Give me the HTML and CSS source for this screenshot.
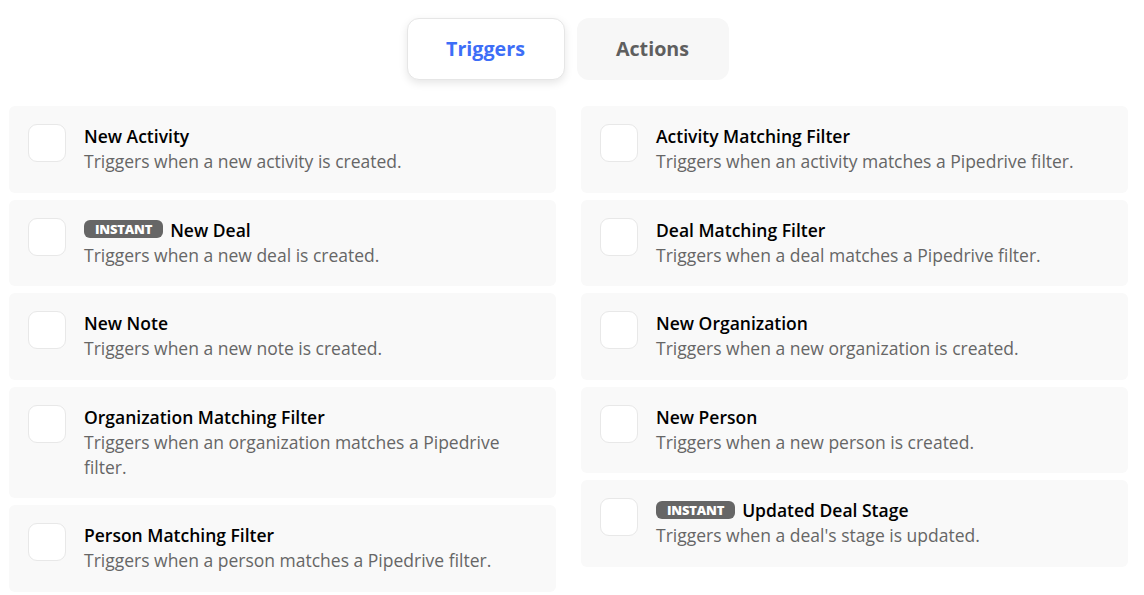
FILE: index.html
```html
<!DOCTYPE html>
<html>
<head>
<meta charset="utf-8">
<link rel="stylesheet" href="styles.css">
</head>
<body>
<div class="page">
  <div class="tabs">
    <button class="tab tab-active">Triggers</button>
    <button class="tab tab-plain">Actions</button>
  </div>
  <div class="columns">
    <div class="col">
      <div class="card"><div class="icon"></div><div class="body"><div class="title">New Activity</div><div class="desc">Triggers when a new activity is created.</div></div></div>
      <div class="card"><div class="icon"></div><div class="body"><div class="title"><span class="badge">INSTANT</span>New Deal</div><div class="desc">Triggers when a new deal is created.</div></div></div>
      <div class="card"><div class="icon"></div><div class="body"><div class="title">New Note</div><div class="desc">Triggers when a new note is created.</div></div></div>
      <div class="card"><div class="icon"></div><div class="body"><div class="title">Organization Matching Filter</div><div class="desc">Triggers when an organization matches a Pipedrive filter.</div></div></div>
      <div class="card"><div class="icon"></div><div class="body"><div class="title">Person Matching Filter</div><div class="desc">Triggers when a person matches a Pipedrive filter.</div></div></div>
    </div>
    <div class="col">
      <div class="card"><div class="icon"></div><div class="body"><div class="title">Activity Matching Filter</div><div class="desc">Triggers when an activity matches a Pipedrive filter.</div></div></div>
      <div class="card"><div class="icon"></div><div class="body"><div class="title">Deal Matching Filter</div><div class="desc">Triggers when a deal matches a Pipedrive filter.</div></div></div>
      <div class="card"><div class="icon"></div><div class="body"><div class="title">New Organization</div><div class="desc">Triggers when a new organization is created.</div></div></div>
      <div class="card"><div class="icon"></div><div class="body"><div class="title">New Person</div><div class="desc">Triggers when a new person is created.</div></div></div>
      <div class="card"><div class="icon"></div><div class="body"><div class="title"><span class="badge">INSTANT</span>Updated Deal Stage</div><div class="desc">Triggers when a deal's stage is updated.</div></div></div>
    </div>
  </div>
</div>
</body>
</html>
```

FILE: styles.css
```css
html, body {
  margin: 0;
  padding: 0;
  background: #ffffff;
}
body {
  font-family: "Open Sans", "Liberation Sans", sans-serif;
  color: #1c1c1c;
}
.page {
  padding: 18px 16px 0 9px;
}
.tabs {
  display: flex;
  justify-content: center;
  gap: 12px;
  padding-right: 2px;
}
.tab {
  font-family: inherit;
  height: 62px;
  border-radius: 12px;
  border: 1px solid transparent;
  background: #f7f7f7;
  color: #5f5f5f;
  font-size: 19.7px;
  font-weight: 700;
  padding: 0 0 2px 0;
  cursor: pointer;
}
.tab-plain {
  width: 152px;
}
.tab-active {
  width: 158px;
  background: #ffffff;
  border-color: #e6e6e6;
  color: #3d6ef7;
  box-shadow: 0 3px 8px rgba(0, 0, 0, 0.1);
}
.columns {
  display: grid;
  grid-template-columns: 547px 547px;
  column-gap: 25px;
  margin-top: 26px;
  align-items: start;
}
.col {
  display: flex;
  flex-direction: column;
  gap: 7px;
}
.card {
  display: flex;
  gap: 18px;
  background: #f9f9f9;
  border-radius: 6px;
  padding: 18px 20px 18.5px 19px;
}
.icon {
  flex: none;
  width: 36px;
  height: 36px;
  background: #ffffff;
  border: 1px solid #e8e8e8;
  border-radius: 9px;
}
.body {
  min-width: 0;
}
.title {
  font-size: 17.5px;
  line-height: 25px;
  font-weight: 600;
  color: #000000;
  display: flex;
  align-items: center;
}
.desc {
  font-size: 17.5px;
  line-height: 25px;
  color: #666666;
}
.badge {
  display: inline-block;
  background: #666666;
  color: #ffffff;
  font-size: 13px;
  font-weight: 800;
  line-height: 18px;
  height: 18px;
  padding: 0 11px;
  border-radius: 6px;
  margin-right: 7px;
  margin-top: -2px;
  letter-spacing: -0.2px;
}
```
